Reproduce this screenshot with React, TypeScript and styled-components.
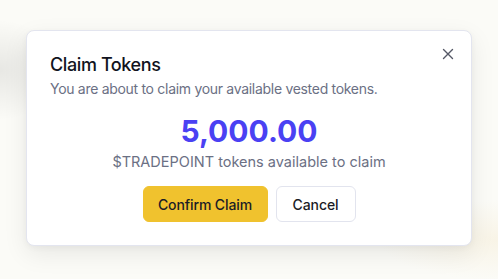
import React from "react";
import styled, { createGlobalStyle } from "styled-components";

const Global = createGlobalStyle`
  html, body { margin: 0; padding: 0; }
  body {
    width: 498px;
    height: 279px;
    overflow: hidden;
    background: #fbfbf7;
    font-family: Inter, "Noto Sans", sans-serif;
    -webkit-font-smoothing: antialiased;
  }
`;

const Backdrop = styled.div`
  position: relative;
  width: 498px;
  height: 279px;
  padding: 30px 26px 0;
  box-sizing: border-box;
  background: radial-gradient(ellipse 60px 50px at 0px 70px, rgba(0,0,0,0.08), transparent),
    radial-gradient(ellipse 120px 40px at 498px 240px, rgba(245,235,210,0.45), transparent),
    #fbfbf7;
`;

const Card = styled.div`
  position: relative;
  width: 446px;
  height: 216px;
  box-sizing: border-box;
  background: #ffffff;
  border: 1px solid #e3e5ef;
  border-radius: 8px;
  box-shadow: 0 8px 24px rgba(0, 0, 0, 0.08), 0 2px 6px rgba(0, 0, 0, 0.04);
  padding: 21px 23px 0;
  display: flex;
  flex-direction: column;
`;

const Title = styled.h2`
  margin: 0;
  font-size: 18px;
  font-weight: 500;
  line-height: 26px;
  color: #111320;
  letter-spacing: -0.4px;
`;

const Description = styled.p`
  margin: 1px 0 0;
  font-size: 14px;
  line-height: 20px;
  color: #6b7084;
  letter-spacing: -0.3px;
`;

const Amount = styled.div`
  margin-top: 15px;
  text-align: center;
  font-size: 30px;
  font-weight: 700;
  line-height: 34px;
  color: #4a41f3;
`;

const Caption = styled.div`
  margin-top: 4px;
  text-align: center;
  font-size: 14.5px;
  line-height: 20px;
  color: #6b7084;
`;

const Actions = styled.div`
  margin-top: 14px;
  display: flex;
  justify-content: center;
  gap: 8px;
`;

const Button = styled.button<{ $primary?: boolean }>`
  height: 36px;
  box-sizing: border-box;
  padding: 0;
  border-radius: 6px;
  font-family: Inter, "Noto Sans", sans-serif;
  font-size: 14px;
  font-weight: 500;
  letter-spacing: -0.1px;
  white-space: nowrap;
  color: #1b1c26;
  cursor: pointer;
  border: 1px solid ${(p) => (p.$primary ? "#f0c22e" : "#e2e4ee")};
  background: ${(p) => (p.$primary ? "#f0c22e" : "#ffffff")};
  width: ${(p) => (p.$primary ? "125px" : "80px")};
`;

const Close = styled.button`
  position: absolute;
  top: 15px;
  right: 15px;
  width: 16px;
  height: 16px;
  padding: 0;
  border: none;
  background: transparent;
  display: flex;
  align-items: center;
  justify-content: center;
  color: #555866;
  cursor: pointer;
`;

export default function App() {
  return (
    <>
      <Global />
      <Backdrop>
        <Card>
          <Close aria-label="Close">
            <svg width="12" height="12" viewBox="0 0 12 12" fill="none">
              <path d="M1.5 1.5L10.5 10.5M10.5 1.5L1.5 10.5" stroke="currentColor" strokeWidth="1.4" strokeLinecap="round" />
            </svg>
          </Close>
          <Title>Claim Tokens</Title>
          <Description>You are about to claim your available vested tokens.</Description>
          <Amount>5,000.00</Amount>
          <Caption>$TRADEPOINT tokens available to claim</Caption>
          <Actions>
            <Button $primary>Confirm Claim</Button>
            <Button>Cancel</Button>
          </Actions>
        </Card>
      </Backdrop>
    </>
  );
}
